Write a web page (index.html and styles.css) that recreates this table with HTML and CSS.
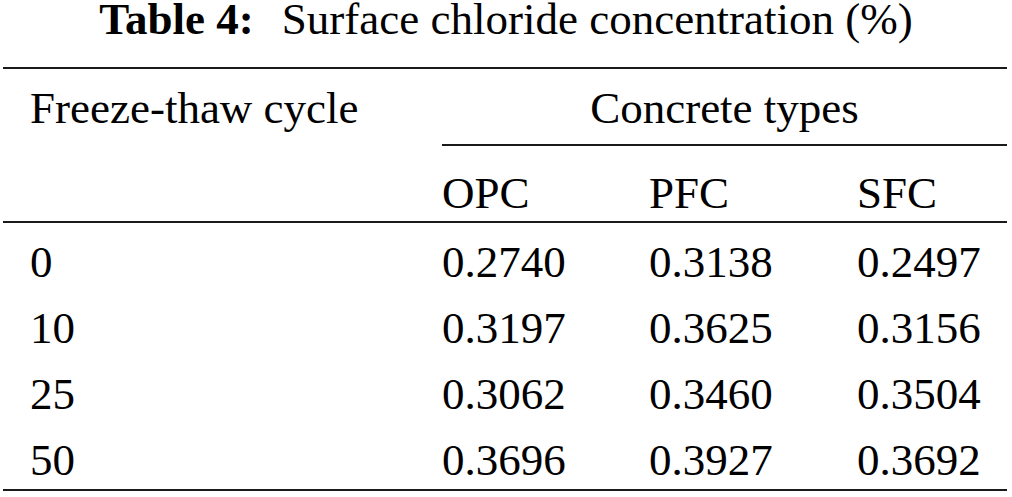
FILE: index.html
```html
<!DOCTYPE html>
<html lang="en">
<head>
<meta charset="utf-8">
<title>Table 4</title>
<link rel="stylesheet" href="styles.css">
</head>
<body>
<div class="caption"><span class="label">Table 4:</span>Surface chloride concentration (%)</div>
<div class="tbl">
  <div class="row head1">
    <div class="cell first">Freeze-thaw cycle</div>
    <div class="cell group">Concrete types</div>
  </div>
  <div class="row head2">
    <div class="cell first"></div>
    <div class="cell">OPC</div>
    <div class="cell">PFC</div>
    <div class="cell">SFC</div>
  </div>
  <div class="body">
    <div class="row data">
      <div class="cell first">0</div>
      <div class="cell">0.2740</div>
      <div class="cell">0.3138</div>
      <div class="cell">0.2497</div>
    </div>
    <div class="row data">
      <div class="cell first">10</div>
      <div class="cell">0.3197</div>
      <div class="cell">0.3625</div>
      <div class="cell">0.3156</div>
    </div>
    <div class="row data">
      <div class="cell first">25</div>
      <div class="cell">0.3062</div>
      <div class="cell">0.3460</div>
      <div class="cell">0.3504</div>
    </div>
    <div class="row data last">
      <div class="cell first">50</div>
      <div class="cell">0.3696</div>
      <div class="cell">0.3927</div>
      <div class="cell">0.3692</div>
    </div>
  </div>
</div>
</body>
</html>
```

FILE: styles.css
```css
html, body {
  margin: 0;
  padding: 0;
  background: #ffffff;
}

body {
  font-family: "Liberation Serif", "Times New Roman", serif;
  font-size: 45px;
  color: #000000;
}

.caption {
  text-align: center;
  line-height: 38px;
  height: 38px;
  white-space: nowrap;
  margin-bottom: 29px;
}

.caption .label {
  font-weight: bold;
  margin-right: 28px;
}

.tbl {
  width: 1004px;
  margin-left: 3px;
  border-top: 2px solid #1a1a1a;
  border-bottom: 2px solid #1a1a1a;
}

.row {
  display: grid;
  grid-template-columns: 439px 207px 208px 150px;
  white-space: nowrap;
}

.cell.first {
  padding-left: 27px;
}

.head1 {
  grid-template-columns: 439px 565px;
}

.head1 .cell {
  padding-top: 4px;
  line-height: 71px;
}

.head1 .group {
  text-align: center;
  border-bottom: 2px solid #1a1a1a;
}

.head2 {
  border-bottom: 2px solid #1a1a1a;
}

.head2 .cell {
  padding-top: 19px;
  line-height: 56px;
}

.body {
  padding-top: 6px;
}

.data {
  height: 66px;
  line-height: 66px;
}

.data.last {
  height: 62px;
}
```
